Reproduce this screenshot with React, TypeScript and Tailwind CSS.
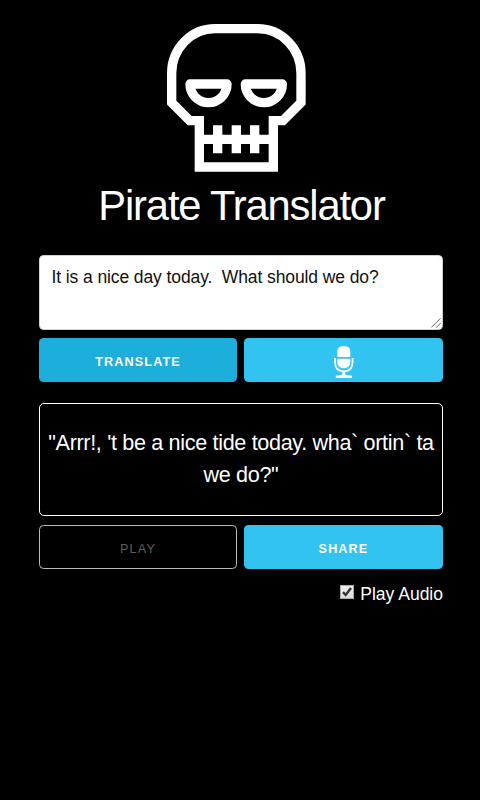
import { useState } from "react";

const button =
  "flex h-[44px] items-center justify-center rounded-[4.5px] text-[12.6px] uppercase tracking-[1.15px]";

function Skull() {
  return (
    <svg viewBox="18 27 420 444" className="h-[148px] w-[140px]" fill="none" stroke="#fff" strokeWidth="28">
      <path d="M35 175A130 134 0 0 1 165 41H293A130 134 0 0 1 423 175V263L369 317H340V456H118V317H89L35 263Z" />
      <path d="M90 207H201A55.5 56 0 0 1 90 207Z" strokeLinejoin="round" />
      <path d="M256 207H367A55.5 56 0 0 1 256 207Z" strokeLinejoin="round" />
      <path d="M118 373H340M173 331V415M229 331V415M284 331V415" />
    </svg>
  );
}

function Microphone() {
  return (
    <svg viewBox="0 0 20 32" className="h-[32px] w-[20px]" fill="#fff">
      <path d="M3.3 11V5.5C3.3 2 5.3.3 9.8.3S16.3 2 16.3 5.5V11Z" />
      <path d="M3.3 12.8H16.3V15.5C16.3 20 13.8 22.3 9.8 22.3S3.3 20 3.3 15.5Z" />
      <path
        d="M1 12V16C1 22 4.3 25.3 9.8 25.3S18.6 22 18.6 16V12"
        fill="none"
        stroke="#fff"
        strokeWidth="1.8"
      />
      <path d="M8.3 25H11.3V28C12 29.3 13.5 29.5 17.8 29.5V32H1.8V29.5C6 29.5 7.6 29.3 8.3 28Z" />
    </svg>
  );
}

export default function App() {
  const [text, setText] = useState("It is a nice day today.  What should we do?");
  const [playAudio, setPlayAudio] = useState(true);

  return (
    <main className="min-h-screen bg-black pr-[37px] pl-[39px] pt-[24px] font-['Liberation_Sans',Arial,sans-serif] text-white">
      <header className="flex flex-col items-center pr-[10px]">
        <Skull />
        <h1 className="mt-[9px] whitespace-nowrap pl-[11px] text-[41.7px] leading-[50px] tracking-[-1.15px]">
          Pirate Translator
        </h1>
      </header>

      <div className="relative mt-[24px]">
        <textarea
          value={text}
          onChange={(e) => setText(e.target.value)}
          className="block h-[75px] w-full resize-none rounded-[4.5px] border border-[#d1d1d1] bg-white pr-[12px] pl-[11.5px] py-[8px] text-[17.5px] leading-[27px] tracking-[-0.1px] text-[#111] outline-none"
        />
        {/* resize grip */}
        <svg
          viewBox="0 0 10 10"
          className="pointer-events-none absolute right-[2px] bottom-[2px] size-[10px]"
          fill="none"
          stroke="#666"
          strokeWidth="1"
        >
          <path d="M.3 9.5L9.5.3M5 9.7L9.7 5" />
        </svg>
      </div>

      <div className="mt-[8px] grid grid-cols-[198px_199px] gap-[7px]">
        <button className={`${button} bg-[#1eaedb] pt-[4px] font-bold`}>Translate</button>
        <button aria-label="Speak" className={`${button} bg-[#33c3f0] pt-[4px]`}>
          <Microphone />
        </button>
      </div>

      <div className="mt-[21px] flex h-[113px] items-center justify-center rounded-[5px] border border-white text-center text-[21.6px] leading-[32px] tracking-[-0.34px]">
        <p className="-mt-[2px] whitespace-nowrap">
          "Arrr!, 't be a nice tide today. wha` ortin` ta
          <br />
          we do?"
        </p>
      </div>

      <div className="mt-[9px] grid grid-cols-[198px_199px] gap-[7px]">
        <button disabled className={`${button} border border-[#bbb] pt-[4px] text-[#5c5c5c]`}>
          Play
        </button>
        <button className={`${button} bg-[#33c3f0] pt-[4px] font-bold`}>Share</button>
      </div>

      <label className="mt-[11px] flex items-center justify-end gap-[6px] text-[17.5px] leading-[28px]">
        <input
          type="checkbox"
          checked={playAudio}
          onChange={(e) => setPlayAudio(e.target.checked)}
          className="sr-only"
        />
        <span className="-mt-[4px] flex size-[14px] items-center justify-center border border-[#aaa] bg-linear-to-b from-[#eee] to-[#ddd]">
          {playAudio && (
            <svg viewBox="0 0 12 12" className="size-[12px]" fill="none" stroke="#333" strokeWidth="2.4">
              <path d="M2 6.2L4.7 9L10 2" />
            </svg>
          )}
        </span>
        Play Audio
      </label>
    </main>
  );
}
